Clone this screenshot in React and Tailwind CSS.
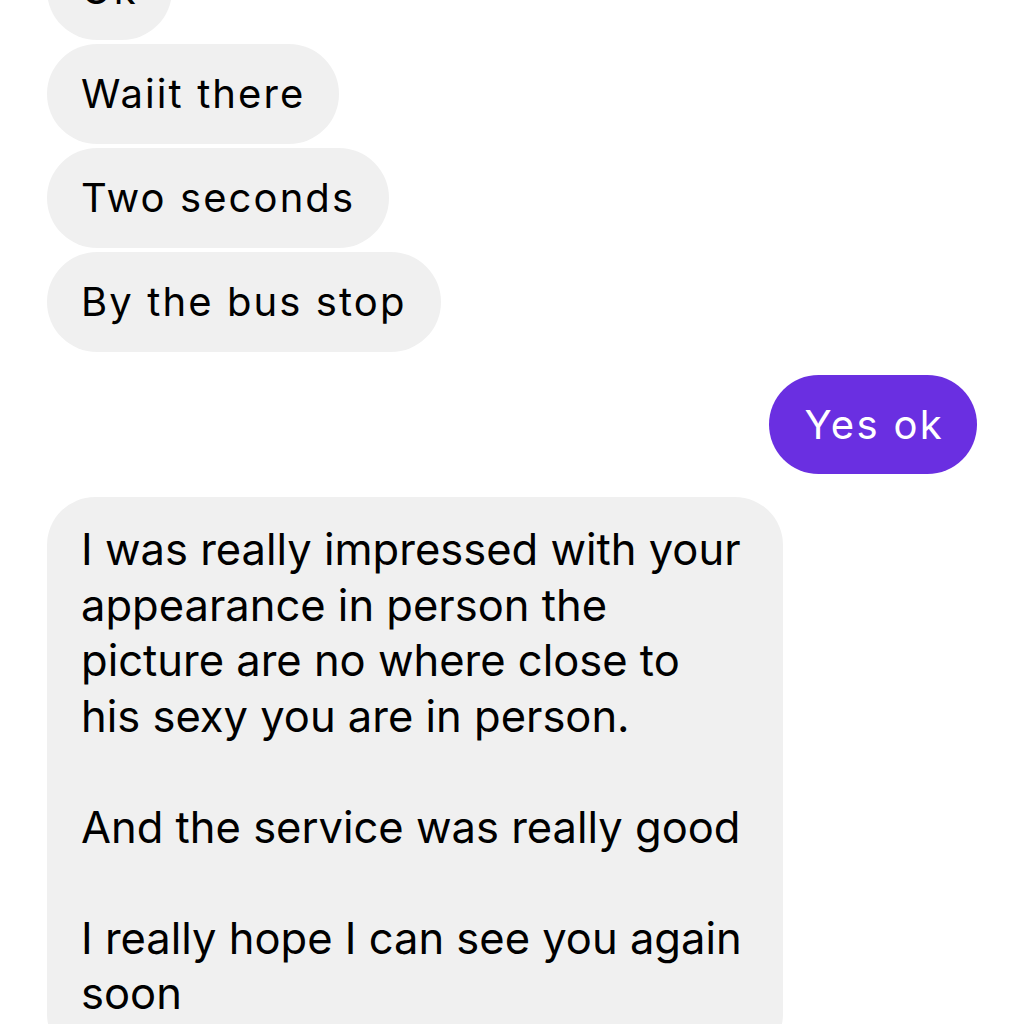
/**
 * Chat thread — received bubbles on the left, sent bubble on the right.
 */

const font = { fontFamily: 'Inter, "Noto Sans", sans-serif' };

const shortMessages = ['Ok', 'Waiit there', 'Two seconds', 'By the bus stop'];

const longLines = [
  'I was really impressed with your',
  'appearance in person the',
  'picture are no where close to',
  'his sexy you are in person.',
  '',
  'And the service was really good',
  '',
  'I really hope I can see you again',
  'soon',
];

function Bubble({ children }) {
  return (
    <div className="flex h-[100px] items-center rounded-full bg-[#f0f0f0] px-[34px] text-[40px] tracking-[2.1px] text-black">
      {children}
    </div>
  );
}

export default function App() {
  return (
    <div className="h-[1024px] w-[1024px] overflow-hidden bg-white" style={font}>
      <div className="-mt-[60px] flex flex-col px-[47px]">
        {/* Received short replies */}
        <div className="flex flex-col items-start gap-[4px]">
          {shortMessages.map((m) => (
            <Bubble key={m}>{m}</Bubble>
          ))}
        </div>

        {/* Sent */}
        <div className="mt-[23px] flex justify-end">
          <div className="flex h-[99px] items-center rounded-full bg-[#6a2fe1] pl-[35px] pr-[33px] text-[40px] tracking-[2.3px] text-white">
            Yes ok
          </div>
        </div>

        {/* Long received message */}
        <div className="mt-[23px] w-[736px] rounded-[48px] bg-[#f0f0f0] px-[34px] pt-[25px] pb-[40px] text-[43.5px] leading-[55.5px] text-black">
          {longLines.map((l, i) => (
            <div key={i} className="h-[55.5px] whitespace-nowrap">
              {l}
            </div>
          ))}
        </div>
      </div>
    </div>
  );
}
